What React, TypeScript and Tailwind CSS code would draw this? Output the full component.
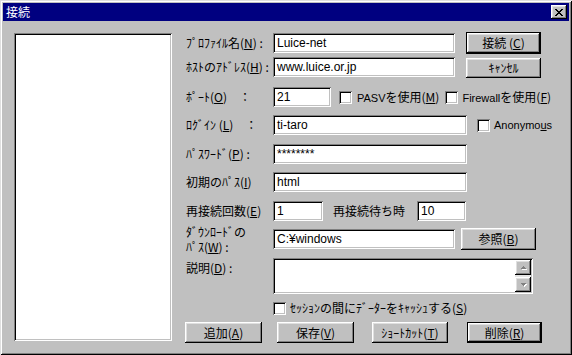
import React from "react";

const sunken =
  "shadow-[inset_1px_1px_0_#808080,inset_-1px_-1px_0_#ffffff,inset_2px_2px_0_#000000,inset_-2px_-2px_0_#c0c0c0]";
const raised =
  "shadow-[inset_-1px_-1px_0_#000000,inset_1px_1px_0_#ffffff,inset_-2px_-2px_0_#808080,inset_2px_2px_0_#dfdfdf]";

function U({ children }: { children: React.ReactNode }) {
  return <span className="underline underline-offset-[1px]">{children}</span>;
}

function Field({ w, value }: { w: string; value?: string }) {
  return (
    <div
      className={`${sunken} ${w} h-[20px] bg-white flex items-center pl-[4px] whitespace-nowrap font-['Liberation_Sans',sans-serif] text-[12px]`}
    >
      {value}
    </div>
  );
}

function Btn({
  w,
  h,
  def,
  children,
  className = "",
}: {
  w: string;
  h: string;
  def?: boolean;
  children: React.ReactNode;
  className?: string;
}) {
  if (def) {
    return (
      <div className={`${w} ${h} border border-black bg-[#c0c0c0] ${className}`}>
        <div className={`${raised} w-full h-full flex items-center justify-center whitespace-nowrap`}>
          {children}
        </div>
      </div>
    );
  }
  return (
    <div
      className={`${raised} ${w} ${h} bg-[#c0c0c0] flex items-center justify-center whitespace-nowrap ${className}`}
    >
      {children}
    </div>
  );
}

function Check({ className = "" }: { className?: string }) {
  return <div className={`${sunken} w-[13px] h-[13px] bg-white shrink-0 ${className}`} />;
}

function Label({ children }: { children: React.ReactNode }) {
  return (
    <div className="w-[88px] pl-[1px] h-[20px] flex items-center whitespace-nowrap shrink-0">{children}</div>
  );
}

const xPattern = ["11....11", ".11..11.", "..1111..", "...11...", "..1111..", ".11..11.", "11....11"];

function CloseX() {
  const rects: React.ReactNode[] = [];
  xPattern.forEach((row, y) =>
    row.split("").forEach((c, x) => {
      if (c === "1") rects.push(<rect key={`${x}-${y}`} x={x} y={y} width={1} height={1} fill="#000000" />);
    })
  );
  return (
    <svg width="8" height="7" viewBox="0 0 8 7" shapeRendering="crispEdges" className="block">
      {rects}
    </svg>
  );
}

function Arrow({ up }: { up?: boolean }) {
  return (
    <svg width="9" height="6" viewBox="0 0 9 6" shapeRendering="crispEdges" className="block">
      {up ? (
        <>
          <polygon points="2,5 5,2 8,5" fill="#ffffff" />
          <polygon points="1,4 4,1 7,4" fill="#808080" />
        </>
      ) : (
        <>
          <polygon points="2,2 5,5 8,2" fill="#ffffff" />
          <polygon points="1,1 4,4 7,1" fill="#808080" />
        </>
      )}
    </svg>
  );
}

const latin = "font-['Liberation_Sans',sans-serif] text-[11px]";

export default function App() {
  return (
    <div className="w-[572px] h-[355px] bg-[#c0c0c0] p-[3px] flex flex-col text-[12px] leading-none text-black font-['Noto_Sans_CJK_JP',sans-serif] shadow-[inset_1px_1px_0_#dfdfdf,inset_-1px_-1px_0_#000000,inset_2px_2px_0_#ffffff,inset_-2px_-2px_0_#808080]">
      {/* title bar */}
      <div className="h-[18px] bg-[#000080] flex items-center justify-between pl-[3px] pr-[2px] shrink-0">
        <span className="text-white text-[12px]">接続</span>
        <div className={`${raised} bg-[#c0c0c0] w-[16px] h-[14px] flex items-center justify-center`}>
          <CloseX />
        </div>
      </div>

      {/* body */}
      <div className="flex flex-1">
        <div className={`${sunken} ml-[11px] mt-[12px] w-[158px] h-[308px] bg-white shrink-0`} />

        <div className="ml-[13px] flex flex-col">
          {/* row 1 */}
          <div className="mt-[11px] h-[22px] flex items-start">
            <div className="mt-[1px]">
              <Label>
                ﾌﾟﾛﾌｧｲﾙ名(<U>N</U>) :
              </Label>
            </div>
            <div className="mt-[1px]">
              <Field w="w-[182px]" value="Luice-net" />
            </div>
            <Btn def w="w-[75px]" h="h-[22px]" className="ml-[11px]">
              接続 (<U>C</U>)
            </Btn>
          </div>

          {/* row 2 */}
          <div className="mt-[3px] h-[21px] flex items-start">
            <Label>
              ﾎｽﾄのｱﾄﾞﾚｽ(<U>H</U>) :
            </Label>
            <Field w="w-[182px]" value="www.luice.or.jp" />
            <Btn w="w-[75px]" h="h-[20px]" className="ml-[11px] mt-[1px]">
              ｷｬﾝｾﾙ
            </Btn>
          </div>

          {/* row 3 */}
          <div className="mt-[9px] h-[20px] flex items-center">
            <Label>ﾎﾟｰﾄ(<U>O</U>)　：</Label>
            <Field w="w-[58px]" value="21" />
            <Check className="ml-[8px]" />
            <span className="ml-[5px] whitespace-nowrap">
              <span className={latin}>PASV</span>を使用(<U>M</U>)
            </span>
            <Check className="ml-[6px]" />
            <span className="ml-[4px] whitespace-nowrap">
              <span className={latin}>Firewall</span>を使用(<U>F</U>)
            </span>
          </div>

          {/* row 4 */}
          <div className="mt-[8px] h-[20px] flex items-center">
            <Label>ﾛｸﾞｲﾝ (<U>L</U>)　：</Label>
            <Field w="w-[194px]" value="ti-taro" />
            <Check className="ml-[10px]" />
            <span className={`ml-[4px] whitespace-nowrap ${latin}`}>
              Anonymo<U>u</U>s
            </span>
          </div>

          {/* row 5 */}
          <div className="mt-[9px] h-[20px] flex items-center">
            <Label>ﾊﾟｽﾜｰﾄﾞ(<U>P</U>) :</Label>
            <Field w="w-[194px]" value="********" />
          </div>

          {/* row 6 */}
          <div className="mt-[8px] h-[20px] flex items-center">
            <Label>初期のﾊﾟｽ(<U>I</U>)</Label>
            <Field w="w-[194px]" value="html" />
          </div>

          {/* row 7 */}
          <div className="mt-[9px] h-[20px] flex items-center">
            <Label>再接続回数(<U>E</U>)</Label>
            <Field w="w-[50px]" value="1" />
            <span className="ml-[10px] w-[72px] whitespace-nowrap">再接続待ち時</span>
            <div className="ml-[12px]">
              <Field w="w-[49px]" value="10" />
            </div>
          </div>

          {/* row 8 */}
          <div className="mt-[7px] h-[22px] flex items-center">
            <div className="w-[88px] h-[22px] pl-[1px] flex flex-col justify-center leading-[15px] whitespace-nowrap shrink-0">
              <span>ﾀﾞｳﾝﾛｰﾄﾞの</span>
              <span>ﾊﾟｽ(<U>W</U>) :</span>
            </div>
            <Field w="w-[182px]" value="C:¥windows" />
            <Btn w="w-[75px]" h="h-[22px]" className="ml-[6px]">
              参照(<U>B</U>)
            </Btn>
          </div>

          {/* row 9 */}
          <div className="mt-[8px] h-[36px] flex items-start">
            <div className="w-[88px] pl-[1px] h-[20px] flex items-center whitespace-nowrap shrink-0">
              説明(<U>D</U>) :
            </div>
            <div className={`${sunken} w-[260px] h-[36px] bg-white flex justify-end p-[2px]`}>
              <div className="w-[16px] h-full flex flex-col">
                <div className={`${raised} w-[16px] h-[15px] bg-[#c0c0c0] flex items-center justify-center`}>
                  <Arrow up />
                </div>
                <div className="h-[2px] bg-[#e4e4e4]" />
                <div className={`${raised} w-[16px] h-[15px] bg-[#c0c0c0] flex items-center justify-center`}>
                  <Arrow />
                </div>
              </div>
            </div>
          </div>

          {/* row 10 */}
          <div className="mt-[6px] h-[16px] flex items-center">
            <div className="w-[88px] shrink-0" />
            <Check />
            <span className="ml-[4px] whitespace-nowrap">
              ｾｯｼｮﾝの間にﾃﾞｰﾀｰをｷｬｯｼｭする(<U>S</U>)
            </span>
          </div>

          {/* row 11 */}
          <div className="mt-[6px] h-[21px] flex items-center">
            <Btn w="w-[77px]" h="h-[21px]">
              追加(<U>A</U>)
            </Btn>
            <Btn w="w-[77px]" h="h-[21px]" className="ml-[15px]">
              保存(<U>V</U>)
            </Btn>
            <Btn w="w-[76px]" h="h-[21px]" className="ml-[18px]">
              ｼｮｰﾄｶｯﾄ(<U>T</U>)
            </Btn>
            <Btn def w="w-[75px]" h="h-[21px]" className="ml-[19px]">
              削除(<U>R</U>)
            </Btn>
          </div>
        </div>
      </div>
    </div>
  );
}
